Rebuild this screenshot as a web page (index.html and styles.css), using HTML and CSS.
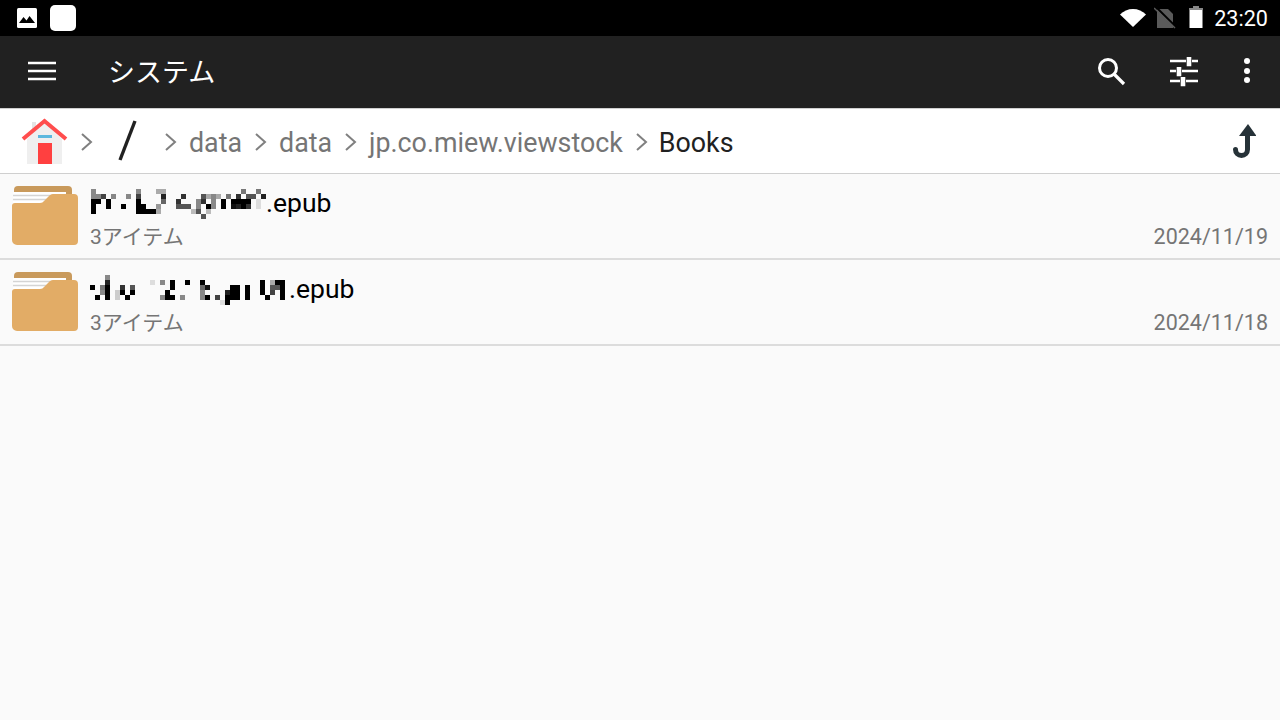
FILE: index.html
```html
<!doctype html>
<html lang="ja">
<head>
<meta charset="utf-8">
<title>システム</title>
<link rel="stylesheet" href="styles.css">
</head>
<body>
<div class="status">
    <svg class="st-photo" width="24" height="24" viewBox="0 0 24 24"><rect x="2" y="2" width="20" height="20" rx="1.5" fill="#fff"/><path d="M4 18l4.500-6 3 3.500 3-4.500 5.500 7z" fill="#000" transform="translate(0 -1)"/></svg>
    <div class="st-square"></div>
    <div class="spacer"></div>
    <svg class="st-wifi" width="26" height="20" viewBox="0 0 26 20"><path d="M0 6.500C3.500 3 8 1 13 1s9.500 2 13 5.500L13 19z" fill="#fff"/></svg>
    <svg class="st-sim" width="22" height="22" viewBox="0 0 22 22"><path d="M3 2h11l5 5v14H3z" fill="#5a5a5a"/><path d="M1 -1L22 20" stroke="#000" stroke-width="2"/><path d="M0 1l21 20" stroke="#5a5a5a" stroke-width="1.500"/></svg>
    <svg class="st-batt" width="14" height="22" viewBox="0 0 14 22"><path d="M4.500 0h5v2h4v20H.5V2h4z" fill="#fff"/><path d="M4.500 0h5v2h4v2H.5V2h4z" fill="#888"/></svg>
    <span class="st-time">23:20</span>
</div>

<div class="toolbar">
    <svg class="menu" width="30" height="20" viewBox="0 0 30 20"><path d="M1 2h28M1 10h28M1 18h28" stroke="#fff" stroke-width="2.600"/></svg>
    <div class="title">システム</div>
    <div class="spacer"></div>
    <svg class="tool" width="32" height="32" viewBox="0 0 32 32"><circle cx="13" cy="13" r="8.500" fill="none" stroke="#fff" stroke-width="3"/><path d="M19 19l10 10" stroke="#fff" stroke-width="3.200"/></svg>
    <svg class="tool" width="32" height="32" viewBox="0 0 32 32"><path d="M2 6h16M24 6h6M20 2v8h2V2M2 16h6M14 16h16M10 12v8h2v-8M2 26h10M18 26h12M14 22v8h2v-8" stroke="#fff" stroke-width="2.600" fill="none"/></svg>
    <svg class="tool tool-more" width="32" height="32" viewBox="0 0 32 32"><circle cx="16" cy="6" r="3" fill="#fff"/><circle cx="16" cy="16" r="3" fill="#fff"/><circle cx="16" cy="25" r="3" fill="#fff"/></svg>
</div>

<div class="crumbs">
    <svg class="home" width="50" height="48" viewBox="0 0 50 48">
        <path d="M12 5h4v10h-4z" fill="#e4e4e4"/>
        <path d="M7 22L24.500 5 42 22v25H7z" fill="#efefef"/>
        <path d="M18 26h14v21H18z" fill="#ff4040"/>
        <path d="M18 18h14v3H18z" fill="#5bb8de"/>
        <path d="M3 22L24.500 4 46 22" fill="none" stroke="#ff4d4d" stroke-width="4"/>
    </svg>
    <svg class="chev" width="14" height="20" viewBox="0 0 14 20"><path d="M2 2l9 8-9 8" fill="none" stroke="#808080" stroke-width="2"/></svg>
    <svg class="root" width="20" height="42" viewBox="0 0 20 42"><path d="M18 1L3 40" stroke="#212121" stroke-width="3.400"/></svg>
    <svg class="chev" width="14" height="20" viewBox="0 0 14 20"><path d="M2 2l9 8-9 8" fill="none" stroke="#808080" stroke-width="2"/></svg>
    <span class="crumb">data</span>
    <svg class="chev" width="14" height="20" viewBox="0 0 14 20"><path d="M2 2l9 8-9 8" fill="none" stroke="#808080" stroke-width="2"/></svg>
    <span class="crumb">data</span>
    <svg class="chev" width="14" height="20" viewBox="0 0 14 20"><path d="M2 2l9 8-9 8" fill="none" stroke="#808080" stroke-width="2"/></svg>
    <span class="crumb">jp.co.miew.viewstock</span>
    <svg class="chev" width="14" height="20" viewBox="0 0 14 20"><path d="M2 2l9 8-9 8" fill="none" stroke="#808080" stroke-width="2"/></svg>
    <span class="crumb current">Books</span>
    <div class="spacer"></div>
    <svg class="up" width="26" height="36" viewBox="0 0 26 36"><path d="M18 1l8.500 12H9z" fill="#263238"/><path d="M17.500 12V26.500a6 6 0 0 1-12 0" fill="none" stroke="#263238" stroke-width="5" stroke-linecap="round"/></svg>
</div>

<div class="list">
    <div class="row">
        <svg class="folder" width="68" height="60" viewBox="0 0 68 60">
            <path d="M4 10V4a4 4 0 0 1 4-4h50a4 4 0 0 1 4 4v8z" fill="#c99a5c"/>
            <path d="M3 6h53v13H3z" fill="#fff"/>
            <path d="M3 9.500h50M3 13.500h44" stroke="#d4d4d4" stroke-width="1.500"/>
            <path d="M2 20a3 3 0 0 1 3-3h25c2 0 3-1 4-2l5-5c1-1 2-2 4-2h21a4 4 0 0 1 4 4v43a4 4 0 0 1-4 4H7a5 5 0 0 1-5-5z" fill="#e2ac66"/>
        </svg>
        <div class="info">
            <div class="name">
                <svg class="mosaic mosaic-a" width="177" height="30" viewBox="0 0 177 30" shape-rendering="crispEdges">
                    <rect x="1" y="0" width="5" height="5" fill="#888"/><rect x="46" y="0" width="5" height="5" fill="#888"/><rect x="66" y="0" width="10" height="5" fill="#aaa"/><rect x="151" y="0" width="5" height="5" fill="#777"/><rect x="166" y="0" width="5" height="5" fill="#777"/>
                    <rect x="1" y="5" width="10" height="5" fill="#888"/><rect x="11" y="5" width="5" height="5" fill="#444"/><rect x="21" y="5" width="5" height="5" fill="#888"/><rect x="36" y="5" width="5" height="5" fill="#888"/><rect x="46" y="5" width="5" height="5" fill="#444"/><rect x="71" y="5" width="5" height="5" fill="#222"/><rect x="91" y="5" width="5" height="5" fill="#333"/><rect x="111" y="5" width="5" height="5" fill="#555"/><rect x="116" y="5" width="5" height="5" fill="#aaa"/><rect x="121" y="5" width="5" height="5" fill="#888"/><rect x="126" y="5" width="5" height="5" fill="#aaa"/><rect x="136" y="5" width="5" height="5" fill="#777"/><rect x="146" y="5" width="5" height="5" fill="#333"/><rect x="156" y="5" width="10" height="5" fill="#555"/><rect x="171" y="5" width="5" height="5" fill="#222"/>
                    <rect x="1" y="10" width="10" height="5" fill="#000"/><rect x="16" y="10" width="5" height="5" fill="#000"/><rect x="46" y="10" width="5" height="5" fill="#000"/><rect x="71" y="10" width="5" height="5" fill="#666"/><rect x="86" y="10" width="5" height="5" fill="#333"/><rect x="106" y="10" width="5" height="5" fill="#888"/><rect x="111" y="10" width="5" height="5" fill="#333"/><rect x="121" y="10" width="5" height="5" fill="#888"/><rect x="131" y="10" width="5" height="5" fill="#000"/><rect x="141" y="10" width="20" height="5" fill="#000"/><rect x="166" y="10" width="5" height="5" fill="#ddd"/>
                    <rect x="1" y="15" width="5" height="5" fill="#000"/><rect x="16" y="15" width="5" height="5" fill="#000"/><rect x="31" y="15" width="5" height="5" fill="#000"/><rect x="46" y="15" width="10" height="5" fill="#000"/><rect x="66" y="15" width="5" height="5" fill="#999"/><rect x="86" y="15" width="15" height="5" fill="#555"/><rect x="106" y="15" width="5" height="5" fill="#888"/><rect x="116" y="15" width="5" height="5" fill="#000"/><rect x="121" y="15" width="5" height="5" fill="#888"/><rect x="131" y="15" width="5" height="5" fill="#000"/><rect x="141" y="15" width="5" height="5" fill="#111"/><rect x="146" y="15" width="5" height="5" fill="#222"/><rect x="151" y="15" width="5" height="5" fill="#000"/><rect x="156" y="15" width="5" height="5" fill="#333"/><rect x="166" y="15" width="5" height="5" fill="#ddd"/>
                    <rect x="1" y="20" width="5" height="5" fill="#000"/><rect x="46" y="20" width="20" height="5" fill="#000"/><rect x="66" y="20" width="5" height="5" fill="#aaa"/><rect x="101" y="20" width="5" height="5" fill="#bbb"/><rect x="106" y="20" width="5" height="5" fill="#555"/><rect x="116" y="20" width="5" height="5" fill="#bbb"/>
                    <rect x="111" y="25" width="5" height="5" fill="#555"/>
                </svg><span class="ext">.epub</span>
            </div>
            <div class="meta"><span class="count">3アイテム</span><span class="date">2024/11/19</span></div>
        </div>
    </div>
    <div class="row">
        <svg class="folder" width="68" height="60" viewBox="0 0 68 60">
            <path d="M4 10V4a4 4 0 0 1 4-4h50a4 4 0 0 1 4 4v8z" fill="#c99a5c"/>
            <path d="M3 6h53v13H3z" fill="#fff"/>
            <path d="M3 9.500h50M3 13.500h44" stroke="#d4d4d4" stroke-width="1.500"/>
            <path d="M2 20a3 3 0 0 1 3-3h25c2 0 3-1 4-2l5-5c1-1 2-2 4-2h21a4 4 0 0 1 4 4v43a4 4 0 0 1-4 4H7a5 5 0 0 1-5-5z" fill="#e2ac66"/>
        </svg>
        <div class="info">
            <div class="name">
                <svg class="mosaic mosaic-b" width="200" height="30" viewBox="0 0 200 30" shape-rendering="crispEdges">
                    <rect x="15" y="0" width="5" height="5" fill="#888"/>
                    <rect x="15" y="5" width="5" height="5" fill="#222"/><rect x="60" y="5" width="5" height="5" fill="#ddd"/><rect x="70" y="5" width="5" height="5" fill="#888"/><rect x="80" y="5" width="5" height="5" fill="#000"/><rect x="95" y="5" width="5" height="5" fill="#000"/><rect x="110" y="5" width="5" height="5" fill="#000"/><rect x="170" y="5" width="5" height="5" fill="#000"/><rect x="180" y="5" width="5" height="5" fill="#aaa"/><rect x="185" y="5" width="10" height="5" fill="#000"/>
                    <rect x="0" y="10" width="5" height="5" fill="#000"/><rect x="10" y="10" width="5" height="5" fill="#777"/><rect x="15" y="10" width="5" height="5" fill="#000"/><rect x="30" y="10" width="5" height="5" fill="#333"/><rect x="40" y="10" width="5" height="5" fill="#555"/><rect x="80" y="10" width="5" height="5" fill="#000"/><rect x="110" y="10" width="5" height="5" fill="#666"/><rect x="115" y="10" width="5" height="5" fill="#111"/><rect x="140" y="10" width="10" height="5" fill="#000"/><rect x="155" y="10" width="5" height="5" fill="#000"/><rect x="170" y="10" width="5" height="5" fill="#000"/><rect x="180" y="10" width="10" height="5" fill="#555"/><rect x="190" y="10" width="5" height="5" fill="#000"/>
                    <rect x="10" y="15" width="5" height="5" fill="#888"/><rect x="15" y="15" width="5" height="5" fill="#000"/><rect x="25" y="15" width="5" height="5" fill="#ccc"/><rect x="30" y="15" width="5" height="5" fill="#000"/><rect x="40" y="15" width="5" height="5" fill="#000"/><rect x="75" y="15" width="5" height="5" fill="#000"/><rect x="110" y="15" width="5" height="5" fill="#888"/><rect x="135" y="15" width="5" height="5" fill="#222"/><rect x="140" y="15" width="10" height="5" fill="#000"/><rect x="155" y="15" width="5" height="5" fill="#000"/><rect x="170" y="15" width="5" height="5" fill="#000"/><rect x="180" y="15" width="5" height="5" fill="#444"/><rect x="190" y="15" width="5" height="5" fill="#000"/>
                    <rect x="5" y="20" width="5" height="5" fill="#000"/><rect x="15" y="20" width="5" height="5" fill="#000"/><rect x="25" y="20" width="5" height="5" fill="#ccc"/><rect x="35" y="20" width="5" height="5" fill="#000"/><rect x="70" y="20" width="5" height="5" fill="#888"/><rect x="75" y="20" width="10" height="5" fill="#000"/><rect x="90" y="20" width="5" height="5" fill="#888"/><rect x="110" y="20" width="5" height="5" fill="#888"/><rect x="115" y="20" width="5" height="5" fill="#000"/><rect x="125" y="20" width="5" height="5" fill="#444"/><rect x="135" y="20" width="15" height="5" fill="#000"/><rect x="155" y="20" width="5" height="5" fill="#000"/><rect x="175" y="20" width="5" height="5" fill="#000"/><rect x="190" y="20" width="5" height="5" fill="#000"/>
                    <rect x="130" y="25" width="5" height="5" fill="#ddd"/><rect x="135" y="25" width="5" height="5" fill="#000"/>
                </svg><span class="ext">.epub</span>
            </div>
            <div class="meta"><span class="count">3アイテム</span><span class="date">2024/11/18</span></div>
        </div>
    </div>
</div>
</body>
</html>
```
FILE: styles.css
```css
html, body { height: 100%; }
body {
    margin: 0;
    background: #fafafa;
    color: #000;
    font-family: Roboto, "Noto Sans CJK JP", sans-serif;
    overflow: hidden;
}
.spacer { flex: 1; }

/* status bar */
.status {
    height: 36px;
    background: #000;
    display: flex;
    align-items: center;
    padding: 0 12px 0 15px;
}
.st-square {
    width: 26px;
    height: 26px;
    margin-left: 11px;
    background: #fff;
    border-radius: 5px;
}
.st-wifi { margin-right: 8px; }
.st-sim { margin-right: 13px; }
.st-batt { margin: 0 11px 2px 0; }
.st-time {
    color: #fff;
    font-size: 21.6px;
}

/* toolbar */
.toolbar {
    height: 72px;
    background: #212121;
    display: flex;
    align-items: center;
    padding: 0 17px 2px 27px;
    box-sizing: border-box;
}
.title {
    margin: 0 0 2px 51px;
    color: #fff;
    font-size: 27px;
}
.tool { margin-left: 41px; }
.tool-more { margin-left: 31px; }

/* breadcrumb */
.crumbs {
    height: 66px;
    box-sizing: border-box;
    background: #fff;
    border-top: 1px solid #cfcfcf;
    border-bottom: 1px solid #cfcfcf;
    display: flex;
    align-items: center;
    padding: 0 24px 0 20px;
}
.home { margin-right: 10px; }
.chev { flex: none; margin-top: 2px; }
.root { margin: 0 27px 0 23px; }
.crumb {
    margin: 4px 12px 0 11px;
    color: #757575;
    font-size: 26.8px;
}
.crumb.current { margin-left: 10px; color: #212121; }

/* file list */
.row {
    height: 86px;
    box-sizing: border-box;
    border-bottom: 2px solid #dcdcdc;
    display: flex;
    align-items: center;
    padding: 0 12px 0 10px;
}
.folder { flex: none; }
.info {
    flex: 1;
    margin-left: 12px;
}
.name {
    display: flex;
    align-items: center;
    height: 42px;
    font-size: 26.5px;
}
.mosaic { flex: none; margin-right: -1px; }
.ext { margin-bottom: 2px; }
.meta {
    display: flex;
    justify-content: space-between;
    align-items: baseline;
    margin-top: -1px;
    color: #757575;
    line-height: 26px;
}
.count { font-size: 21px; }
.date { font-size: 21.5px; }
```
